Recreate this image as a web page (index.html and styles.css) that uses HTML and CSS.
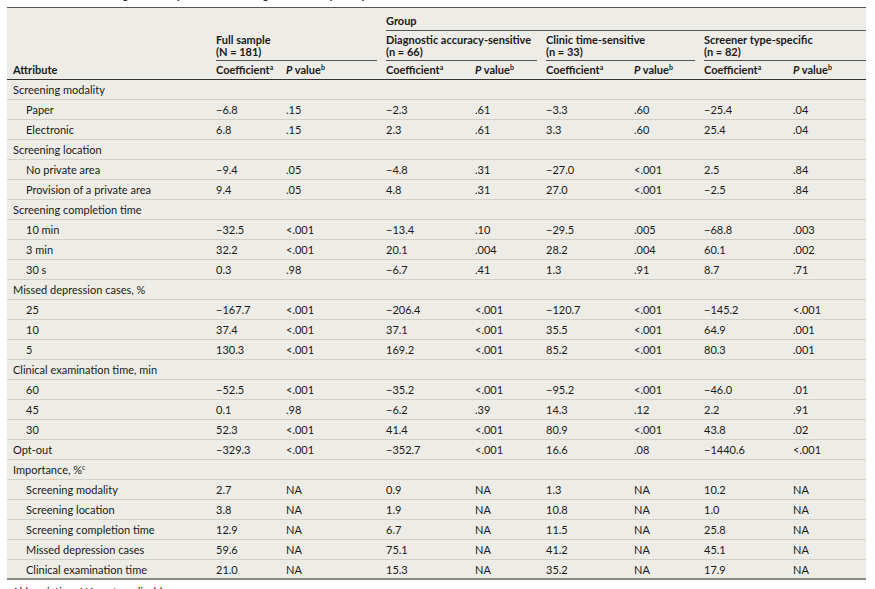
FILE: index.html
```html
<!DOCTYPE html>
<html lang="en">
<head>
<meta charset="utf-8">
<title>Attribute Preferences by Group</title>
<link rel="stylesheet" href="styles.css">
</head>
<body>
<div class="page">
  <div class="caption"><span>Table 2. Preference Weights for Depression Screening Attributes by Group</span></div>
  <div class="table">
    <div class="thead">
      <div class="h-attr"><span>Attribute</span></div>
      <div class="h-group"><div class="ul">Group</div></div>
      <div class="h-full"><div class="ul gap">Full sample<br>(N = 181)</div></div>
      <div class="h-g1"><div class="ul gap">Diagnostic accuracy-sensitive<br>(n = 66)</div></div>
      <div class="h-g2"><div class="ul gap">Clinic time-sensitive<br>(n = 33)</div></div>
      <div class="h-g3"><div class="ul">Screener type-specific<br>(n = 82)</div></div>
      <div class="h-sub c1"><span>Coefficient<sup>a</sup></span></div>
      <div class="h-sub c2"><span><i>P</i> value<sup>b</sup></span></div>
      <div class="h-sub c3"><span>Coefficient<sup>a</sup></span></div>
      <div class="h-sub c4"><span><i>P</i> value<sup>b</sup></span></div>
      <div class="h-sub c5"><span>Coefficient<sup>a</sup></span></div>
      <div class="h-sub c6"><span><i>P</i> value<sup>b</sup></span></div>
      <div class="h-sub c7"><span>Coefficient<sup>a</sup></span></div>
      <div class="h-sub c8"><span><i>P</i> value<sup>b</sup></span></div>
    </div>
    <div class="tbody">
      <div class="row group"><div class="attr">Screening modality</div></div>
      <div class="row"><div class="attr sub">Paper</div><div>−6.8</div><div>.15</div><div>−2.3</div><div>.61</div><div>−3.3</div><div>.60</div><div>−25.4</div><div>.04</div></div>
      <div class="row"><div class="attr sub">Electronic</div><div>6.8</div><div>.15</div><div>2.3</div><div>.61</div><div>3.3</div><div>.60</div><div>25.4</div><div>.04</div></div>
      <div class="row group"><div class="attr">Screening location</div></div>
      <div class="row"><div class="attr sub">No private area</div><div>−9.4</div><div>.05</div><div>−4.8</div><div>.31</div><div>−27.0</div><div>&lt;.001</div><div>2.5</div><div>.84</div></div>
      <div class="row"><div class="attr sub">Provision of a private area</div><div>9.4</div><div>.05</div><div>4.8</div><div>.31</div><div>27.0</div><div>&lt;.001</div><div>−2.5</div><div>.84</div></div>
      <div class="row group"><div class="attr">Screening completion time</div></div>
      <div class="row"><div class="attr sub">10 min</div><div>−32.5</div><div>&lt;.001</div><div>−13.4</div><div>.10</div><div>−29.5</div><div>.005</div><div>−68.8</div><div>.003</div></div>
      <div class="row"><div class="attr sub">3 min</div><div>32.2</div><div>&lt;.001</div><div>20.1</div><div>.004</div><div>28.2</div><div>.004</div><div>60.1</div><div>.002</div></div>
      <div class="row"><div class="attr sub">30 s</div><div>0.3</div><div>.98</div><div>−6.7</div><div>.41</div><div>1.3</div><div>.91</div><div>8.7</div><div>.71</div></div>
      <div class="row group"><div class="attr">Missed depression cases, %</div></div>
      <div class="row"><div class="attr sub">25</div><div>−167.7</div><div>&lt;.001</div><div>−206.4</div><div>&lt;.001</div><div>−120.7</div><div>&lt;.001</div><div>−145.2</div><div>&lt;.001</div></div>
      <div class="row"><div class="attr sub">10</div><div>37.4</div><div>&lt;.001</div><div>37.1</div><div>&lt;.001</div><div>35.5</div><div>&lt;.001</div><div>64.9</div><div>.001</div></div>
      <div class="row"><div class="attr sub">5</div><div>130.3</div><div>&lt;.001</div><div>169.2</div><div>&lt;.001</div><div>85.2</div><div>&lt;.001</div><div>80.3</div><div>.001</div></div>
      <div class="row group"><div class="attr">Clinical examination time, min</div></div>
      <div class="row"><div class="attr sub">60</div><div>−52.5</div><div>&lt;.001</div><div>−35.2</div><div>&lt;.001</div><div>−95.2</div><div>&lt;.001</div><div>−46.0</div><div>.01</div></div>
      <div class="row"><div class="attr sub">45</div><div>0.1</div><div>.98</div><div>−6.2</div><div>.39</div><div>14.3</div><div>.12</div><div>2.2</div><div>.91</div></div>
      <div class="row"><div class="attr sub">30</div><div>52.3</div><div>&lt;.001</div><div>41.4</div><div>&lt;.001</div><div>80.9</div><div>&lt;.001</div><div>43.8</div><div>.02</div></div>
      <div class="row"><div class="attr">Opt-out</div><div>−329.3</div><div>&lt;.001</div><div>−352.7</div><div>&lt;.001</div><div>16.6</div><div>.08</div><div>−1440.6</div><div>&lt;.001</div></div>
      <div class="row group"><div class="attr">Importance, %<sup>c</sup></div></div>
      <div class="row"><div class="attr sub">Screening modality</div><div>2.7</div><div>NA</div><div>0.9</div><div>NA</div><div>1.3</div><div>NA</div><div>10.2</div><div>NA</div></div>
      <div class="row"><div class="attr sub">Screening location</div><div>3.8</div><div>NA</div><div>1.9</div><div>NA</div><div>10.8</div><div>NA</div><div>1.0</div><div>NA</div></div>
      <div class="row"><div class="attr sub">Screening completion time</div><div>12.9</div><div>NA</div><div>6.7</div><div>NA</div><div>11.5</div><div>NA</div><div>25.8</div><div>NA</div></div>
      <div class="row"><div class="attr sub">Missed depression cases</div><div>59.6</div><div>NA</div><div>75.1</div><div>NA</div><div>41.2</div><div>NA</div><div>45.1</div><div>NA</div></div>
      <div class="row last"><div class="attr sub">Clinical examination time</div><div>21.0</div><div>NA</div><div>15.3</div><div>NA</div><div>35.2</div><div>NA</div><div>17.9</div><div>NA</div></div>
    </div>
  </div>
  <div class="footnote">Abbreviation: NA, not applicable.</div>
</div>
</body>
</html>
```

FILE: styles.css
```css
html, body {
  margin: 0;
  padding: 0;
  background: #ffffff;
}

body {
  font-family: Lato, "Liberation Sans", sans-serif;
  font-size: 11px;
  color: #1a1a1a;
}

.page {
  padding-left: 7px;
  width: 859px;
}

.caption {
  height: 7px;
  overflow: hidden;
  display: flex;
  align-items: flex-end;
  font-weight: bold;
  font-size: 11px;
  line-height: 12px;
}

.caption span {
  display: block;
  margin-bottom: 6px;
  white-space: nowrap;
}

.table {
  background: #edece6;
  border-top: 1px solid #555555;
  border-bottom: 2px solid #8a8a86;
}

.thead {
  display: grid;
  grid-template-columns: 209px 70px 100px 89px 71px 88px 70px 89px 73px;
  grid-template-rows: 23px 30px 18px;
  border-bottom: 1px solid #333333;
  font-weight: bold;
  line-height: 12px;
}

.thead > div {
  display: flex;
  flex-direction: column;
  justify-content: flex-end;
}

.thead span {
  display: block;
  white-space: nowrap;
}

.h-attr {
  grid-column: 1;
  grid-row: 1 / 4;
  padding-left: 6px;
  padding-bottom: 3px;
}

.h-group { grid-column: 4 / 10; grid-row: 1; }
.h-full { grid-column: 2 / 4; grid-row: 2; }
.h-g1 { grid-column: 4 / 6; grid-row: 2; }
.h-g2 { grid-column: 6 / 8; grid-row: 2; }
.h-g3 { grid-column: 8 / 10; grid-row: 2; }

.ul {
  border-bottom: 1px solid #555555;
  padding-bottom: 2px;
  white-space: nowrap;
}

.h-group .ul {
  padding-bottom: 3px;
}

.ul.gap {
  margin-right: 9px;
}

.h-sub {
  grid-row: 3;
  padding-bottom: 3px;
}

.c1 { grid-column: 2; }
.c2 { grid-column: 3; }
.c3 { grid-column: 4; }
.c4 { grid-column: 5; }
.c5 { grid-column: 6; }
.c6 { grid-column: 7; }
.c7 { grid-column: 8; }
.c8 { grid-column: 9; }

sup {
  font-size: 7px;
  line-height: 0;
  vertical-align: 4px;
  font-weight: normal;
}

.thead sup {
  font-weight: bold;
}

.row {
  display: grid;
  grid-template-columns: 209px 70px 100px 89px 71px 88px 70px 89px 73px;
  height: 19px;
  line-height: 19px;
  border-bottom: 1px solid #d2d0c9;
}

.row.last {
  border-bottom: none;
  height: 18px;
}

.attr {
  padding-left: 6px;
  white-space: nowrap;
}

.attr.sub {
  padding-left: 19px;
}

.footnote {
  margin-top: 6px;
  padding-left: 5px;
  font-size: 11px;
  line-height: 12px;
}
```
